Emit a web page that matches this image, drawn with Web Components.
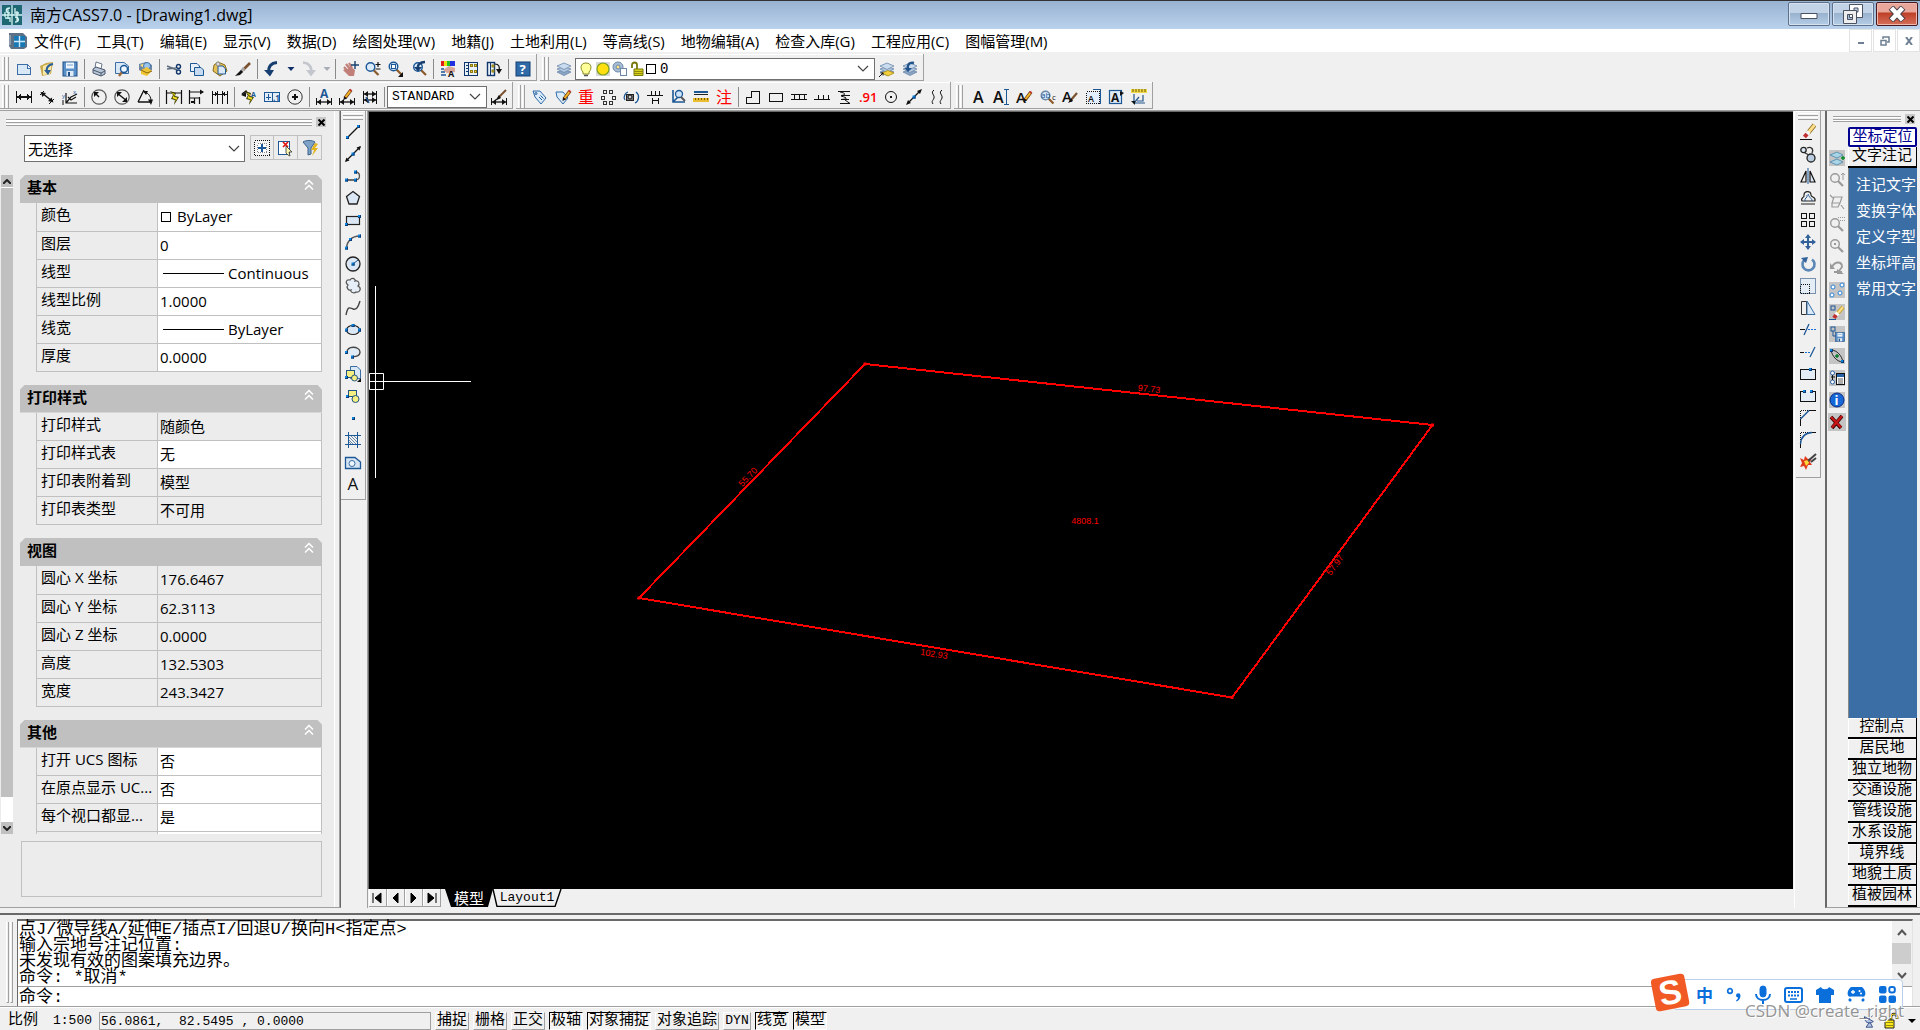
<!DOCTYPE html>
<html lang="zh-CN">
<head>
<meta charset="utf-8">
<title>南方CASS7.0 - [Drawing1.dwg]</title>
<style>
html,body{margin:0;height:100%;overflow:hidden}
body{font:15px/20px "Open Sans","Noto Sans CJK SC",sans-serif;color:#000;background:#f0f0f0;
--mono:"Liberation Mono","Noto Sans CJK SC",monospace}
</style>
</head>
<body>
<cad-shell>
  <title-bar>南方CASS7.0 - [Drawing1.dwg]</title-bar>
  <menu-bar>
    <button>文件(F)</button><button>工具(T)</button><button>编辑(E)</button><button>显示(V)</button><button>数据(D)</button><button>绘图处理(W)</button><button>地籍(J)</button><button>土地利用(L)</button><button>等高线(S)</button><button>地物编辑(A)</button><button>检查入库(G)</button><button>工程应用(C)</button><button>图幅管理(M)</button>
  </menu-bar>
  <tool-dock>
    <tool-row>
      <tool-bar label="标准" icons="new open save | print preview publish | cut copy paste brush | undo drop redo dropoff | pan zoom zoomwin zoomprev | props center palettes | help"></tool-bar>
      <tool-bar label="图层"><tool-button icon="layers"></tool-button><layer-combo></layer-combo><tool-button icon="layercur"></tool-button><tool-button icon="layerprev"></tool-button></tool-bar>
    </tool-row>
    <tool-row>
      <tool-bar label="标注" icons="dimlin dimalign dimord | dimrad dimdia dimang | dimquick dimbase dimcont | leader tolerance centermark | dimedit dimtedit dimupdate |"><style-combo></style-combo><tool-button icon="dimstyle"></tool-button></tool-bar>
      <tool-bar label="实用工具" icons="tag tagedit redo2 blocks rotcam fence coordzoom ruler note | house rect road wall slope elev circ pline curve2"></tool-bar>
      <tool-bar label="文字" icons="textA textI textedit textfind textstyle textscale textjust textspace"></tool-bar>
    </tool-row>
  </tool-dock>
  <work-area>
    <property-palette></property-palette>
    <tool-bar vertical label="绘图" icons="line xline polyline polygon rectangle arc circle cloud spline ellipse elarc insert block point hatch region mtext"></tool-bar>
    <drawing-view></drawing-view>
    <tool-bar vertical label="修改" icons="erase copyobj mirror offset array move rotate scale stretch trim extend breakpt break chamfer fillet explode"></tool-bar>
    <screen-menu></screen-menu>
  </work-area>
  <command-dock></command-dock>
  <status-bar></status-bar>
</cad-shell>
<ime-bar></ime-bar>

<script>
/* ---- icon drawing helpers, 16 x 16 grid ---- */
const P=(d,s='#111',w=1,f='none')=>`<path d="${d}" stroke="${s}" stroke-width="${w}" fill="${f}"/>`;
const F=(d,f='#111')=>`<path d="${d}" fill="${f}"/>`;
const C=(x,y,r,s='#111',f='none',w=1)=>`<circle cx="${x}" cy="${y}" r="${r}" stroke="${s}" fill="${f}" stroke-width="${w}"/>`;
const R=(x,y,w,h,s='#111',f='none',k=1)=>`<rect x="${x}" y="${y}" width="${w}" height="${h}" stroke="${s}" fill="${f}" stroke-width="${k}"/>`;
const Q=(x,y)=>`<rect x="${x}" y="${y}" width="3" height="3" fill="#0b86e0"/><path d="M${x} ${y+2.5}h3M${x+2.5} ${y}v3" stroke="#0a3d78"/>`;
const T=(x,y,z,t,c='#111',w=400)=>`<text x="${x}" y="${y}" font-size="${z}" fill="${c}" font-weight="${w}" font-family="Open Sans,Noto Sans CJK SC,sans-serif">${t}</text>`;
const B='#1c5796',LB='#cfe0f1',Y='#f3cf3d',G='#9a9a9a';
const pencil=(x,y)=>`<g transform="translate(${x} ${y})">${P('M1 9L7 1','#6a3a10',3.4)}${P('M1.6 8L6.6 1.6','#f5b52a',2)}${F('M-.5 11L0 7.5L2.8 9.4Z')}${P('M6 2L7.4 .6','#c43a3a',2.4)}</g>`;
const bolt=F('M4 2L10 4L9 7L13 8L8 16L9 11L5 10L7 6Z','#3b3b00')+F('M5.3 3.4L9 5L8 7.7L11.6 8.7L9 13L9.8 10.2L6.3 9.3L8 6Z','#f5e020');
const lens=(x,y,c=B,f='#d9ebfa')=>P(`M${x+3} ${y+3}L${x+8} ${y+8}`,c===G?G:'#8a5a2a',2.2)+C(x,y,4.3,c,f,1.4);
const sheets=P('M1 11L8 8.5L15 11L8 14.5Z','#6c87a8',.8,'#8aa5c4')+P('M1 8L8 5.5L15 8L8 11.5Z','#6c87a8',.8,'#b2c8e0')+P('M1 5L8 2L15 5L8 8.5Z','#6c87a8',.8,'#c9dbee');
const floppy=(x,y,k)=>`<g transform="translate(${x} ${y}) scale(${k})">${R(1,1,14,14,'#1d4f86','#5a8fc8')}${F('M4 1.5h8v6H4Z','#eef5fc')}${F('M4.5 10h7v5h-7Z','#dfe9f3')}${F('M6 11h2v4H6Z','#1d4f86')}${P('M5 4h6','#7aa2cc')}</g>`;
const bg='<path d="M0 0h16v16H0Z" fill="#c4c4c4"/>';
const dimH=(y,x0=1,x1=15)=>P(`M${x0} ${y}H${x1}`,'#111',1.3)+F(`M${x0} ${y}l4 -3v6ZM${x1} ${y}l-4 -3v6Z`);
const lock=(c='#d9d018')=>P('M3 7V4a2.5 2.5 0 0 1 5 0V8','#77780a',1.8)+P('M5 8h9v6.500H5Z','#77780a',1,c)+P('M5 10.500h9M5 12.500h9','#8c8a10');
const ICON={
new:P('M1.500 3.500H11L14.500 7V13.500H1.500Z','#3a6ea5',1,'#d8e8f7')+P('M11 3.500V7H14.500','#3a6ea5',1,'#fff'),
open:F('M1 5L7 2L14 1L12 13L3 15Z','#c9a94d')+F('M4 5L13 2L11 13L4 14Z','#f7e9a8')+P('M14 3C8 4 7 8 8 11','#2b5e97',2.2)+F('M5 9L12 9L9 14Z','#2b5e97'),
save:floppy(0,0,1),
print:F('M5 1L11 3L10 8L4 7Z','#fff')+P('M5 1L11 3L10 8L4 7Z','#68758a')+P('M2 8L5 6L14 9V13L10 15L2 12Z','#4a586e',1,'#b9c6d8')+P('M2 9L10 12L14 10M10 12V15','#4a586e'),
preview:P('M1.500 1.500H10L14.500 5V12.500H1.500Z','#3a6ea5',1,'#d8e8f7')+P('M8 11L5 15','#9a6a3a',2.4)+C(10,8,3.500,B,'#eef6ff',1.400),
publish:F('M2 3L9 1L15 4V9L9 13L2 9Z','#6f87a5')+F('M3 4L9 2L14 5L8 8Z','#ffe680')+C(10,5,3.500,'#3c6ea5','#9cc6ee')+F('M4 9L10 6L15 10L10 15L4 13Z','#f0c535')+P('M4 9L10 12L15 10','#8a6a10'),
cut:P('M1 5L11 9M1 8L10 7','#5e6e80',1.600)+C(12.500,5.500,2,'#10366b','none',1.400)+C(12.500,11,2,'#10366b','none',1.400),
copy:P('M1.500 2.500H8L10.500 5V10.500H1.500Z',B,1,'#e8f1fa')+P('M5.500 6.500H12L14.500 9V14.500H5.500Z',B,1,'#c6dbf0'),
paste:P('M2 4L6 1L13 4L15 10L8 15L1 10Z','#8a6d1f',1,'#e6c157')+P('M6 5H11L13.500 8V13H6Z',B,1,'#dbe9f7')+C(6,3,2,'#8a8a8a','#ddd'),
brush:P('M15 2L8 9','#7a5230',2.600)+P('M9 7L6 11','#a8a8a8',3)+F('M6 9L8 11L5 14L0 15Z','#111'),
undo:P('M13 1.500C7 2 4 6 5 11','#173e70',3)+F('M0 9H10L6 15.500Z','#173e70'),
redo:P('M3 1.500C9 2 12 6 11 11','#c3c6cc',2.600)+F('M6 9H16L11 15.500Z','#c3c6cc'),
drop:F('M4.500 6H11.500L8 10Z','#10306a'),dropoff:F('M4.500 6H11.500L8 10Z','#a9adb5'),
pan:P('M2 6L6 10M4 3L8 8M7 2L10 7','#c07f78',2.200)+F('M4 9L9 6L13 9L12 15H7L1 9L3 8Z','#c07f78')+P('M13 0V8M9 4H17','#17406f',1.400),
zoom:lens(5.500,6)+P('M13 1V6M10.500 3.500H15.500M10.500 8H15.500','#111',1.200),
zoomwin:lens(5.500,5.500)+R(3.500,3.500,4,4,B,'#fff')+F('M15 11V16H10Z'),
zoomprev:lens(7,6)+P('M14 1C9 1 6 4 7 8','#173e70',2.400)+F('M3 6H11L7 10.500Z','#173e70'),
props:F('M1 0h4v5H1Z','#e01c1c')+F('M4 0h3v5H4Z','#f0e010')+F('M7 0h3v5H7Z','#20c020')+F('M10 0h5v5h-5Z','#2030e0')+F('M3 9L9 5L15 7V11L7 12Z','#d8a59a')+P('M1 8h3M1 11h4M1 14h5',B,1.500)+T(8,16,9,'A','#111',700),
center:R(1.500,1.500,13,13,'#10366b','#e8f0f8',1.400)+P('M5.500 1.500V14.500','#10366b')+P('M2.500 4h2M2.500 7h2M2.500 10h2','#10366b')+R(7.500,3.500,2,2,'#8a7a10',Y)+R(11.500,3.500,2,2,'#8a7a10',Y)+R(7.500,9.500,2,2,'#8a7a10',Y)+R(11.500,9.500,2,2,'#8a7a10',Y),
palettes:R(1.500,1.500,7,13,'#10366b','#e8f0f8',1.400)+P('M4.500 1.500V14.500','#10366b')+R(6,4,2,2,'#8a7a10',Y)+R(6,9,2,2,'#8a7a10',Y)+P('M9 3C13 3 14 6 13 10','#111',1.200)+F('M10 8H16L13 13Z'),
help:R(1,1,14,14,'#123f73','#2f6ba8')+T(4.500,13,13,'?','#fff',700),
layers:sheets,layercur:sheets+P('M3 12L9 9.500L15 12L9 15Z','#a98d10',.8,Y)+P('M0 16L4 12M1.500 12H4V14.500'),
layerprev:sheets+P('M12 2C7 1 5 4 6 8','#23558c',2.400)+F('M2.500 7H10L6 11Z','#23558c'),
dimlin:P('M.5 2V14M15.500 2V14')+dimH(8,1,15),
dimalign:P('M1 6L5 2M10 15L15 10')+P('M3 4L13 12','#111',1.400)+F('M1.500 3L7 4L3.500 8ZM14.500 13.500L9 12L12.500 8.500Z'),
dimord:P('M4 4V14H15M4 14L9 8L15 5','#111',1.200)+P('M6 8L9 11L14 8','#111',1.200)+T(0,9,6,'y',B)+T(11,5,6,'x',B)+P('M1 11V16','#111'),
dimrad:C(8,8,7.200,'#555','none',1.200)+P('M8 8L4 4','#111',1.500)+F('M3 3H8L3 8Z'),
dimdia:C(8,8,7.200,'#555','none',1.200)+P('M3 4L13 12','#111',1.500)+F('M3 3H8L3 8ZM13 13H8L13 8Z'),
dimang:P('M1 13H15M1 13L7 1','#111',1.300)+P('M7 3C12 4 14 8 14 12')+F('M6 2L11 2L9 6ZM14 16L11 10.500H16Z'),
dimquick:P('M.5 1V15M15.500 1V15M1 4H15','#111',1.200)+bolt,
dimbase:P('M.5 1V15M1 3H14M5.500 9V15M10.500 8V15M1 9H10','#111',1.200)+F('M15 3L11 .5V5.500ZM2 12h3v2H2Z'),
dimcont:P('M.5 2V15M5.500 2V15M10.500 2V15M15.500 2V15M0 5H16')+F('M6 5L3 3V7ZM10 5L13 3V7Z'),
leader:P('M1 5L5 2L8 7','#111',1.400)+F('M0 6L5 3V8Z')+bolt+T(10,8,7,'A',B,700),
tolerance:R(.5,3.500,15,9,B,'#e4eefa',1.300)+P('M8 3V13M4.500 5V11M1.500 8H7',B)+T(9,12,8,'.1',B,700),
centermark:C(8,8,7.200,'#333')+P('M5 8H11M8 5V11','#111',2),
dimedit:T(4,9,12,'A',B,700)+P('M.5 9V16M15.500 9V16')+dimH(13,1,15),
dimtedit:P('M.5 9V16M15.500 9V16')+dimH(13,1,15)+pencil(5,0),
dimupdate:P('M1.500 2V15M14.500 2V15')+dimH(11,2,14)+dimH(5,2,14)+P('M4 8L7 14',B,1.400),
dimstyle:P('M.5 9V16M15.500 9V16')+dimH(13,1,15)+P('M15 1L8 8','#7a5230',2)+F('M8 6L10 9L4 12Z'),
tag:P('M1 2L8 2L14 9L9 15L3 8Z','#2f6ba8',1,'#dcebf9')+C(4,4.500,1,B)+P('M7 8L10 11M8.500 6.500L11.500 9.500',B),
tagedit:P('M1 3L8 3L13 9L8 15L2 8Z','#2f6ba8',1,'#dcebf9')+pencil(8,1),
redo2:T(0,14,16,'重','#f00'),note:T(0,14,16,'注','#f00'),
blocks:[[2,1],[8,1],[0,7],[11,7],[2,12],[8,12]].map(a=>R(a[0]+.5,a[1]+.5,3,3,'#333')).join(''),
rotcam:R(2.500,5.500,7,6,'#222','#777')+C(6,8,2,'#111','#ccc')+P('M12 3C16 6 15 12 11 14M1 11C-1 8 1 4 4 3',B,1.300),
fence:P('M0 6.500H16M4.500 6V2M8.500 6V2M12.500 6V2M5.500 9V15M11.500 9V15M5.500 11.500H11'),
coordzoom:P('M3 1V13H15M3 13L8 8',B,1.600)+C(9,5,3.500,B,'#cfe4f8',1.300)+P('M11 8L15 12','#555',2),
ruler:P('M1 3H15',B,2)+P('M1 5.500h14','#222',1)+F('M0 9H16V13H0Z','#e9bd2e')+P('M2 9v2M5 9v2M8 9v2M11 9v2M14 9v2','#7a5a00'),
house:P('M1.500 14.500V8.500H6.500V2.500H14.500V14.500Z'),rect:R(1.500,4.500,13,8),
road:P('M0 5.500H16M0 10.500H16M3.500 5V10M8.500 5V10M13.500 5V10'),wall:P('M0 10.500H16M4.500 10V6M9.500 10V6M14.500 10V6'),
slope:P('M1 2.500H13M3 3C9 4 9 6 4 6.500H13M4 7C11 9 11 10 4 10.500H12M3 14.500H13L8 11'),
elev:T(-1,13,13,'.91','#f00',600),circ:C(8,8,5.500)+R(7.500,7.500,1,1),
pline:P('M2 14L14 2','#111',1.300)+F('M0 16L2 11L5 14ZM16 0L14 5L11 2Z')+Q(6.500,6.500),
curve2:P('M5 1C1 4 6 6 5 9S2 12 4 15M13 1C9 4 14 6 13 9S10 12 12 15'),
textA:T(3,14,16,'A','#111',600),textI:T(0,14,16,'A','#111',600)+P('M11 .5H16M13.500 1V15M11 15.500H16',B),
textedit:T(0,14,15,'A','#111',600)+pencil(8,2),textfind:lens(6.500,6.500,'#6a87a8')+T(2,9,8,'ab',B)+T(13,11,8,'c'),
textstyle:T(0,13,15,'A','#111',600)+P('M15 4L9 11','#7a5230',2.200)+F('M9 9L11 12L6 14Z'),
textscale:`<rect x="1.500" y="2.500" width="13" height="12" fill="#e3eefa" stroke="#111" stroke-dasharray="1 1"/>`+P('M8 .5H15.500V15',B)+T(3,13,9,'A','#111',600),
textjust:R(1.500,1.500,12,13,B,'#dfeaf7',1.200)+T(3,13,12,'A','#111',700)+F('M12 2l4 2-4 3Z'),
textspace:F('M0 0H16V4H0Z','#f0d948')+P('M2 0v3M5 0v3M8 0v3M11 0v3M14 0v3','#6a5a00')+P('M3 5V14H14M3 14L8 8M12 6V12H6','#23558c',1.200)+F('M0 12h4v4Z'),
line:P('M3 13L13 3','#111',1.300)+Q(1,12)+Q(12,1),
xline:P('M1 15L15 1','#111',1.300)+F('M0 16L1.500 11.500L4.500 14.500ZM16 0L14.500 4.500L11.500 1.500Z')+Q(6.500,6.500),
polyline:P('M2 12H10','#111',1.200)+P('M10 4C16 4 16 12 10 12','#555',1.300)+Q(0,10.500)+Q(9,10.500)+Q(9,2.500),
polygon:P('M8 1.500L14.500 6.500L12 14H4L1.500 6.500Z','#222',1.300,'#dbe7f4'),
rectangle:R(1.500,4.500,13,8,'#222','#dbe7f4',1.200)+Q(0,11)+Q(13,3),
arc:P('M1.500 14C2 7 7 2 14.500 2','#555',1.400)+Q(0,12.500)+Q(4,4)+Q(13,.5),
circle:C(8,8,7,'#222','#dbe7f4',1.300)+P('M8 8L13 4',B)+Q(6.500,6.500),
cloud:P('M3 7C0 5 1 1 5 2C7 -1 11 1 10 3C14 2 15 6 13 8C17 10 15 15 11 14C9 16 5 14 6 12C3 13 1 9 3 7Z','#555',1.200,'#e6eef7'),
spline:P('M1 15C3 5 5 8 8 9S13 8 15 1','#444',1.400),
ellipse:`<ellipse cx="8" cy="8" rx="6.500" ry="4.500" fill="#dbe7f4" stroke="#222" stroke-width="1.200"/>`+Q(0,6.500)+Q(13,6.500)+Q(6.500,2),
elarc:P('M2 9C1 1 15 2 15 8C15 12 11 13 7 12.500','#444',1.300,'#e0ebf6')+Q(0,7)+Q(6,11.500),
insert:P('M5.500 .5H12L15.500 4V12.500H5.500Z','#3a6ea5',1,'#d8e8f7')+R(1.500,4.500,8,7,'#22557f','#f5ee80')+C(9.500,12,3,'#22557f','#f5ee80')+Q(0,10)+F('M16 12V16H12Z'),
block:R(3.500,2.500,8,6,'#22557f','#f5ee80')+C(10.500,11,3.500,'#22557f','#f5ee80')+Q(1,7),
point:Q(7,7),
hatch:P('M3.500 0V16M12.500 0V16M0 3.500H16M0 12.500H16',B,1.400)+P('M4 5L11 12M4 8L8 12M6 4L12 10M9 4L12 7M4 10l2 2','#4a6f98',.8),
region:P('M.5 3.500H10L15.500 8V14.500H.5Z','#1c5796',1.300,'#d5e4f3')+C(7,9.500,3,'#3a6ea5','#eef5fc'),
mtext:T(2.500,14,17,'A','#111',500),
erase:P('M14.500 1L8 9','#8a6a20',4.400)+P('M14.500 1L8 9','#ffe08a',2.800)+P('M9 7.500L7 10','#f4f4f4',4)+P('M7 10L4.500 13','#c03030',4)+P('M0 15.500H12'),
copyobj:C(3.500,4,2.700,'#222','#dbe7f4',1.300)+C(11,12,4,'#222','#b9cce0',1.300)+P('M5 7L9 9M7 2C11 0 14 3 12 7','#333',1.300),
mirror:P('M1 14H6V3Z','#111',1.200)+P('M10 14H15L10 3Z','#111',1.200,'#dbe7f4')+P('M8 0V16',B),
offset:P('M1 14H15M2 11C0 7 5 8 4 5C4 1 11 0 11 5C11 8 16 6 15 11H2Z','#222',1.200)+P('M5 11C4 8 8 8 7 5M8 4C10 9 12 8 12 11',B),
array:R(1.500,1.500,5,5,'#111','none',1.300)+R(9.500,1.500,5,5,'#111','none',1.300)+R(1.500,9.500,5,5,'#111','none',1.300)+R(9.500,9.500,5,5,'#111','none',1.300),
move:P('M8 1V15M1 8H15','#33619a',2)+F('M8 0L11 4H5ZM8 16L5 12H11ZM0 8L4 5V11ZM16 8L12 11V5Z','#33619a'),
rotate:P('M5 3.500A6 6 0 1 0 12 3.500','#5b86b5',2.600)+F('M1 2L8 1L6 7Z','#33619a'),
scale:P('M.5 .5H15.500V15.500H.5Z','#7890ab',1,'#e4edf6')+`<rect x=".5" y="6.500" width="9" height="9" fill="none" stroke="#111" stroke-dasharray="1 1"/>`,
stretch:P('M1.500 1.500V14.500H6.500V1.500Z','#333',1)+P('M7 1L15 14.500H7Z','#3a6ea5',1,'#d8e8f7'),
trim:P('M0 7.500H5')+P('M4 13L9 2',B,1.300)+`<path d="M8 7.500H16" stroke="#1b6fd0" stroke-dasharray="2 1"/>`,
extend:P('M0 8.500H4')+`<path d="M5 8.500H11" stroke="#1b6fd0" stroke-dasharray="2 1"/>`+P('M10 13L15 3',B,1.300),
breakpt:R(.5,3.500,15,10,'#111','#e4edf6')+Q(9,2),
break:P('M4 3.500H.5V13.500H15.500V3.500H12','#111',1,'#e4edf6')+Q(3,2)+Q(10,2),
chamfer:`<path d="M.5 16V.5H16" stroke="#111" fill="none" stroke-dasharray="1 1"/>`+P('M.5 16V9M9 .5H16')+P('M.5 9L9 .5',B,1.400),
fillet:`<path d="M.5 16V.5H16" stroke="#111" fill="none" stroke-dasharray="1 1"/>`+P('M.5 16V12M12 .5H16')+P('M.5 12C1 5 5 1 12 .5',B,1.400),
explode:F('M0 4L4 6L5 2L8 5L12 4L10 8L12 11L8 11L6 16L4 12L0 13L2 9Z','#e03a1c')+F('M4 7L8 6L9 9L6 12Z','#ffd83a')+P('M8 7L16 0M11 8L16 4','#444',2),
vlayers:bg+P('M1 5L8 2L14 5L8 8ZM1 12L8 9L14 12L8 15Z','#4a86a8',.8,'#a9d4e6')+P('M14 10V6M12 8H16','#0a8a2a',1.500),
g1:lens(6,6,G,'none')+P('M14 1V8M12 3L14 1L16 3',G),
g2:P('M5 3H13L11 9H3ZM3 9V13H9L11 9M1 1L4 4M12 11L15 15',G,1.200),
g3:lens(6,7,G,'none')+`<path d="M9 1.500H16M9 4.500H16" stroke="#9a9a9a" stroke-dasharray="1 1"/>`,
g4:lens(6,6,G,'none')+R(5.500,5.500,1,1,G),
g5:P('M3 7C6 1 13 1 13 7L10 11M13 12H5',G,1.800)+F('M1 3V9H6ZM8 9V14H15Z',G),
nodes:bg+C(4,5,2,'#2a82d8','#fff')+C(13,3,2,'#2a82d8','#fff')+C(3,13,2,'#2a82d8','#fff')+C(11,11,2,'#2a82d8','#fff'),
delnode:bg+R(2,2,4,4,B)+P('M14 3L9 9','#c8a02a',4)+P('M14 3L9 9','#ffe08a',2)+P('M9 9L7 11','#fff',4)+P('M7 11L5 14','#c03030',4)+P('M0 15.500H7',B),
savenode:bg+R(2,1,4,4,B)+P('M4 5V10H8',B)+floppy(6,6,.62),
linknode:bg+P('M2 2C3 8 8 14 14 14C13 8 8 2 2 2','#222',1)+P('M8 10V6M6 8H10','#0a7a2a',1.400)+Q(1,1)+Q(12,12),
listnode:bg+C(3.500,3,2,'#2a62a8','#fff')+C(3.500,12,2,'#2a62a8','#fff')+P('M6 7H2M3.500 5V10')+R(7.500,3.500,8,11,'#111','#fff')+F('M8 4h7v3H8Z','#2a62a8')+P('M9 9h5M9 11h5M9 13h5','#333',.8),
info:bg+C(8,8,7,'#0a2a80','#1668d8')+T(5.500,13,13,'i','#fff',700),
delx:'<path d="M-1 -1h18v18H-1Z" fill="#c4c4c4"/>'+P('M2 3L12 14M13 2L3 14','#300',3.600)+P('M2 3L12 13.500M13 2L3 13.500','#c81414',2.400),
pick:`<rect x=".5" y=".5" width="15" height="15" fill="#f4f4f4" stroke="#111" stroke-dasharray="1 1"/><rect x="3.500" y="3.500" width="9" height="9" fill="#fff" stroke="#888" stroke-dasharray="1 1"/>`+P('M4 8H12M8 4V12',B,2),
pickx:R(.5,1.500,11,13,B,'#fff')+P('M5 2L10 7M10 2L5 7','#e01010',1.600)+P('M8 6L14 12L11 12L12 16L10 15L8 13Z','#333',.8,'#fff8b0'),
filter:P('M1 2C4 0 10 0 13 2L9 8V14L6 15V8Z','#3c6188',1,'#7ea3c8')+F('M13 3L9 10H12L10 16L16 8H13L16 4Z','#e3b41e'),
bulb:P('M5 11C2 8 2 2 8 2S14 8 11 11V13H5Z','#8c8a20',1,'#ffff9a')+P('M6 14.500H10','#555',1.500),
sun:F('M1 1H15V15H1Z','#d9d9d9')+C(8,8,6,'#7aa020','#ffdf10',1.200),
freeze:C(6,6,5,'#6c87a8','#a9bfd8')+C(6,6,2,'#6c87a8','#ffe680')+R(8.500,7.500,6,7,'#6c87a8','#fff'),
unlock:lock(),
lockY:P('M8 7V4a3 3 0 0 1 6 0V6','#222',2.600)+P('M8 7V4a3 3 0 0 1 6 0V6','#ffe81a',1)+P('M2 7h9v8H2Z','#222',1,'#ffe81a')+P('M2 9.500h9M2 12.500h9','#8c8a10'),
dish:P('M3 2C3 9 8 12 14 8ZM9 9L5 15H13L10 9M8 5L13 1','#3a5288',1.200,'#b4c3e2')
};
const CRISP=/^(dimlin|dimcont|fence|house|rect|road|wall|array|breakpt|break|scale|ruler|blocks|center|textscale|pick|hatch|new|tolerance)$/;
const svg=(n,s=16)=>`<svg width="${s}" height="${s}" viewBox="0 0 16 16" overflow="visible" aria-hidden="true"${CRISP.test(n)?' shape-rendering="crispEdges"':''}>${ICON[n]||''}</svg>`;

/* ---- shared base ---- */
const RESET=':host,*{box-sizing:border-box}button{font:inherit;color:inherit;background:none;border:0;padding:0;margin:0;white-space:nowrap}svg{display:block;flex:none}';
function define(name,css,html,setup){
  customElements.define(name,class extends HTMLElement{
    constructor(){super();this.attachShadow({mode:'open'})}
    connectedCallback(){
      if(this.shadowRoot.childNodes.length)return;
      this.shadowRoot.innerHTML=`<style>${RESET}${css}</style>${typeof html==='function'?html(this):html}`;
      if(setup)setup(this);
    }
  });
}

define('cad-shell',':host{display:flex;flex-direction:column;height:100vh;background:#f0f0f0}','<slot></slot>');

define('title-bar',`:host{display:flex;align-items:center;height:29px;flex:none;border-top:1px solid #333;background:linear-gradient(#98b2d1,#bad2ec);padding:0 2px}
h1{font:inherit;font-size:16px;margin:0 auto 0 8px}
.b{display:flex;gap:2px;align-self:flex-start;margin-top:1px}
button{width:42px;height:24px;border:1px solid #5d718c;border-radius:2px;box-shadow:inset 0 0 0 1px #d5e2f0;background:linear-gradient(#c2d3e8 45%,#98b1cd 46%,#b5cde6);display:grid;place-items:center}
.x{border-color:#47181c;box-shadow:inset 0 0 0 1px #f0b9b0;background:linear-gradient(#e9a79b 40%,#bf3f28 46%,#d5705a)}`,
`<svg width="20" height="20" viewBox="0 0 20 20"><path d="M0 0h20v20H0Z" fill="#1d6873"/><path d="M10 0V20M0 10H20M8 3C3 3 3 8 8 8M13 3V8H17M3 13H8V17M13 17C18 17 17 12 13 12M3 7v5M6 4v10M15 6v10" stroke="#d5f3f2" stroke-width="1.300" fill="none"/></svg><h1><slot></slot></h1>
<div class="b"><button aria-label="最小化"><svg width="18" height="18"><path d="M1 8.500H17V13.500H1Z" fill="#fff" stroke="#4a5160"/></svg></button><button aria-label="还原"><svg width="22" height="22"><path d="M7.500 1.500H20.500V14.500H7.500ZM12 5V9H16V5Z" fill="#fff" fill-rule="evenodd" stroke="#4a5160"/><path d="M1.500 7.500H14.500V20.500H1.500ZM5.500 11.500V16.500H10.500V11.500Z" fill="#eee" fill-rule="evenodd" stroke="#4a5160"/></svg></button><button class="x" aria-label="关闭"><svg width="20" height="16"><path d="M4 1.500L16 14.500M16 1.500L4 14.500" stroke="#4a4048" stroke-width="6.500"/><path d="M4.500 2L15.500 14M15.500 2L4.500 14" stroke="#fff" stroke-width="4.500"/></svg></button></div>`);

define('menu-bar',`:host{display:flex;align-items:center;height:23px;flex:none;background:#fff;padding:0 0 0 8px}
nav{display:flex;gap:16px;margin:0 auto 0 6px}
::slotted(button){font:inherit;border:0;background:none;padding:0;margin:0;white-space:nowrap;line-height:20px}
.b{display:flex;gap:1px}.b button{width:23px;height:23px;border:1px solid #e3e3e3;display:grid;place-items:center}`,
`<svg width="20" height="18" viewBox="0 0 20 18"><path d="M1 1H15L19 5V15L16 17H3L1 14Z" fill="#5c7186"/><rect x="6" y="4" width="11" height="11" fill="#1678b4"/><path d="M11.500 4V15M6 9.500H17" stroke="#cbe9fa" stroke-width="1.400"/><path d="M2 3v10" stroke="#b8c6d4"/></svg><nav><slot></slot></nav>
<div class="b"><button aria-label="最小化窗口"><svg width="8" height="8"><path d="M1 6H7" stroke="#6e7f92" stroke-width="2"/></svg></button><button aria-label="还原窗口"><svg width="10" height="10"><path d="M3 3V1H9V6H7M1 4.500H6V9H1Z" stroke="#6e7f92" stroke-width="1.500" fill="none"/></svg></button><button aria-label="关闭窗口"><svg width="8" height="8"><path d="M1 0L7 8M7 0L1 8" stroke="#6e7f92" stroke-width="2"/></svg></button></div>`);

define('tool-dock',':host{display:flex;flex-direction:column;gap:1px;flex:none;padding:2px 0 1px}','<slot></slot>');
define('tool-row',':host{display:flex;gap:3px}','<slot></slot>');
define('tool-button',`:host{display:block}button{width:23px;height:22px;display:grid;place-items:center}:host([icon^=drop]) button{width:13px}`,
 h=>`<button aria-label="${h.getAttribute('icon')}">${svg(h.getAttribute('icon'))}</button>`);

define('tool-bar',`:host{display:flex;align-items:center;height:27px;padding:3px 2px 0 0;border:solid #a0a0a0;border-width:0 1px 1px 0;box-shadow:inset 0 1px #fff}
.g{width:12px;height:23px;flex:none;display:flex;gap:1px;padding-left:2px}
.g i{width:3px;border:solid;border-width:0 1px 0 1px;border-color:#fff #a0a0a0 #fff #fff}
.s{width:6px;height:20px;flex:none;display:flex;justify-content:center}.s:before{content:"";width:1px;background:#8a8a8a}
:host([vertical]){flex-direction:column;width:25px;height:auto;align-self:flex-start;padding:1px 0 4px;flex:none}
:host([vertical]) .g{width:100%;height:9px;flex-direction:column;padding:1px 2px}
:host([vertical]) .g i{width:auto;height:3px;border-width:1px 0;border-color:#fff #fff #a0a0a0}`,
 h=>`<div class="g"><i></i><i></i></div>${(h.getAttribute('icons')||'').split(' ').filter(Boolean).map(n=>n==='|'?'<span class="s"></span>':`<tool-button icon="${n}"></tool-button>`).join('')}<slot></slot>`,
 h=>{h.setAttribute('role','toolbar');h.setAttribute('aria-label',h.getAttribute('label'))});

const CHEV='<svg class="v" width="12" height="8" viewBox="0 0 12 8"><path d="M1 1L6 6L11 1" fill="none" stroke="#444" stroke-width="1.200"/></svg>';
const COMBO=`:host{display:grid}select{appearance:none;border:1px solid #707070;border-radius:0;background:#fff;color:#000;margin:0;outline:0;width:100%}.v{justify-self:end;align-self:center;margin-right:6px;pointer-events:none}select,.i,.v{grid-area:1/1}`;
define('style-combo',COMBO+':host{width:100px}select{height:22px;font:13px/20px var(--mono);padding:0 4px}',`<select aria-label="标注样式"><option>STANDARD</option></select>${CHEV}`);
define('layer-combo',COMBO+`:host{width:300px}select{height:22px;font:14px/18px "Liberation Mono",monospace;padding:0 0 0 84px}
.i{display:flex;align-items:center;gap:1px;padding-left:3px;pointer-events:none}.i b{width:10px;height:10px;border:1px solid #000}`,
`<select aria-label="图层"><option>0</option></select><span class="i">${['bulb','sun','freeze','unlock'].map(n=>svg(n)).join('')}<b></b></span>${CHEV}`);

define('work-area',':host{display:flex;flex:1;min-height:0;border-top:1px solid #a0a0a0}','<slot></slot>');

/* ---- properties ---- */
const GROUPS=[
['基本',[['颜色','<i class="sw"></i>ByLayer',1],['图层','0',1],['线型','<i class="ln"></i>Continuous',1],['线型比例','1.0000',1],['线宽','<i class="ln"></i>ByLayer',1],['厚度','0.0000',1]]],
['打印样式',[['打印样式','随颜色'],['打印样式表','无',1],['打印表附着到','模型'],['打印表类型','不可用']]],
['视图',[['圆心 X 坐标','176.6467'],['圆心 Y 坐标','62.3113'],['圆心 Z 坐标','0.0000'],['高度','132.5303'],['宽度','243.3427']]],
['其他',[['打开 UCS 图标','否',1],['在原点显示 UC...','否',1],['每个视口都显...','是',1],['','',1]]]];
define('property-group',`:host{display:block;flex:none;margin-bottom:13px}
button{display:flex;width:100%;height:28px;align-items:flex-start;justify-content:space-between;padding:2px 7px 0;background:#c0c0c0;font-weight:700;clip-path:polygon(5px 0,calc(100% - 5px) 0,100% 5px,100% 100%,0 100%,0 5px)}
button svg{margin:2px 1px}
table{border-collapse:collapse;table-layout:fixed;width:calc(100% - 16px);margin-left:16px}
th,td{height:28px;border:1px solid #c0c0c0;border-top:0;font-weight:400;text-align:left;white-space:nowrap;overflow:hidden}
th{width:121px;padding:0 0 5px 4px}td{padding:0 2px 1px}.w{background:#fff}
.sw{display:inline-block;width:10px;height:10px;border:1px solid #000;margin:0 6px 0 1px}.ln{display:inline-block;width:61px;height:1px;background:#000;margin:0 4px 5px 3px}`,
h=>{const g=GROUPS[+h.getAttribute('group')];return `<button><span>${g[0]}</span><svg width="10" height="12"><path d="M1 5.500L5 1.500L9 5.500M1 10.500L5 6.500L9 10.500" stroke="#fff" stroke-width="1.500" fill="none"/></svg></button><table>${g[1].map(r=>`<tr><th scope="row">${r[0]}</th><td class="${r[2]?'w':''}">${r[1]}</td></tr>`).join('')}</table>`});

define('property-palette',`:host{display:flex;flex-direction:column;width:341px;flex:none;background:#ececec;border:solid #696969;border-width:0 1px 1px 0;border-bottom-color:#a0a0a0;box-shadow:inset -1px 0 #a0a0a0,inset -5px 0 #f0f0f0,inset -6px 0 #fff;padding:5px 18px 10px 1px}
.t{display:flex;align-items:center;gap:4px;padding:0 0 0 5px;height:12px;margin-right:-4px}
.t i{flex:1;height:7px;border:solid #a0a0a0;border-width:1px 0;background:linear-gradient(#fff 2px,#a0a0a0 2px,#a0a0a0 3px,#ececec 3px,#ececec 4px,#fff 4px)}
.t button{width:10px;height:10px;background:#c8c8c8;display:grid;place-items:center}
.c{display:flex;padding-left:23px;margin:7px 0 13px;align-items:flex-start}
.k{display:grid;flex:1;margin-right:5px}.k>*{grid-area:1/1}
select{appearance:none;height:27px;border:1px solid #707070;border-radius:0;background:#fff;font:inherit;color:#000;padding:0 3px;width:100%}
.v{justify-self:end;align-self:center;margin-right:5px;pointer-events:none}
.c button{width:24px;height:25px;border:1px solid #c0c0c0;display:grid;place-items:center}.c button+button{border-left:0}
.s{flex:1;min-height:0;display:flex;overflow:hidden;gap:7px}
.bar{width:12px;flex:none;display:flex;flex-direction:column;background:#fff}
.bar button{height:12px;background:#c0c0c0;display:grid;place-items:center}
.bar div{flex:1;background:#c0c0c0;border-top:1px solid #fff}.bar span{flex:0 0 25px}
.l{flex:1;display:flex;flex-direction:column;overflow:hidden}
.d{height:56px;flex:none;border:1px solid #c0c0c0;margin:7px 0 0 20px}`,
`<div class="t"><i></i><button aria-label="关闭"><svg width="7" height="7"><path d="M.5 .5L6.500 6.500M6.500 .5L.5 6.500" stroke="#000" stroke-width="2"/></svg></button></div>
<div class="c"><span class="k"><select aria-label="选择对象"><option>无选择</option></select>${CHEV}</span><button aria-label="切换">${svg('pick')}</button><button aria-label="选择">${svg('pickx')}</button><button aria-label="快速选择">${svg('filter')}</button></div>
<div class="s"><div class="bar"><button aria-label="上"><svg width="8" height="5"><path d="M0 5L4 1L8 5" stroke="#222" stroke-width="2" fill="none"/></svg></button><div></div><span></span><button aria-label="下"><svg width="8" height="5"><path d="M0 0L4 4L8 0" stroke="#222" stroke-width="2" fill="none"/></svg></button></div>
<div class="l">${GROUPS.map((g,i)=>`<property-group group="${i}"></property-group>`).join('')}</div></div><div class="d"></div>`);

const dim=(x,y,a,t)=>`<text x="${x}" y="${y}" transform="rotate(${a} ${x} ${y})" dominant-baseline="central">${t}</text>`;
define('drawing-view',`:host{display:flex;flex-direction:column;flex:1;min-width:0;margin:0 1px;border-left:1px solid #a0a0a0;box-shadow:inset -1px 0 #fff}
.m{flex:1;min-height:0;margin-right:2px;background:#000;border:solid #696969;border-width:1px 0 0 1px}
.m svg{width:100%;height:100%}text{font-size:9px;font-family:"Liberation Sans Narrow","Liberation Sans",sans-serif;fill:#f00;text-anchor:middle}
.f{height:19px;flex:none;display:flex;padding-left:1px}
.n{width:18px;height:18px;border:solid #a0a0a0;border-width:0 1px 1px 0;box-shadow:inset 1px 0 #fff;display:grid;place-items:center}
.t{display:grid;height:18px;line-height:18px;place-items:center}.t>*{grid-area:1/1}
.a{color:#fff;width:50px;margin-left:3px}.b{font:13px/18px var(--mono);width:74px;margin-left:-4px}`,
`<div class="m"><svg><path shape-rendering="crispEdges" d="M496 252L1063.500 313L863 585.500L270 486Z" fill="none" stroke="#f00" stroke-width="2"/>
<path d="M494.500 250.500h3v3h-3ZM1062 311.500h3v3h-3ZM861.500 584h3v3h-3ZM268.500 484.500h3v3h-3Z" fill="#f00"/>
${dim(780,277,6,'97.73')}${dim(379,365,-46,'55.70')}${dim(966,453,-54,'57.97')}${dim(565,542,9,'102.93')}${dim(716,409,0,'4808.1')}
<path d="M6.500 174V366M0 269.500H102M.5 261.500H14.500V277.500H.5Z" fill="none" stroke="#fff"/></svg></div>
<div class="f">${['M2 2V12M10 2V12L4 7Z','M9 2V12L4 7Z','M4 2V12L9 7Z','M3 2V12L9 7ZM11 2V12'].map((d,i)=>`<button class="n" aria-label="布局导航 ${i+1}"><svg width="13" height="14"><path d="${d}" fill="#000" stroke="#000"/></svg></button>`).join('')}
<button class="t a"><svg width="50" height="18"><path d="M1 0H49L44 18H7Z"/></svg><span>模型</span></button><button class="t b"><svg width="74" height="18"><path d="M3 0L7 17.500H65L71 0" fill="none" stroke="#000" stroke-width="1.400"/></svg><span>Layout1</span></button></div>`);

/* ---- screen menu ---- */
define('screen-menu',`:host{display:flex;flex-direction:column;width:95px;flex:none;margin-left:4px;border:solid #696969;border-width:0 0 1px 2px;border-bottom-color:#a0a0a0;font:15px/20px var(--mono);overflow:hidden}
.t{display:flex;align-items:center;height:16px;padding:0 5px 0 6px;gap:4px}.t i{flex:1;height:6px;border:1px solid #a0a0a0;border-width:1px 0;background:linear-gradient(#fff 1px,#ececec 1px,#ececec 2px,#a0a0a0 2px,#a0a0a0 3px,#fff 3px)}
.t button{width:10px;height:10px;background:#c8c8c8;display:grid;place-items:center}
.r{flex:1;display:flex;min-height:0}
.i{width:21px;flex:none;display:flex;flex-direction:column;padding-top:20px}.i button{height:22px;width:19px;display:grid;place-items:center}
.m{flex:1;min-width:0;margin-right:3px;display:flex;flex-direction:column}
.m>button{height:21px;flex:none;border:solid #000;border-width:0 1px 2px 0;box-shadow:inset 1px 1px #fff;width:100%;background:#f0f0f0;padding-top:1px;line-height:18px}
.m>.on{border:2px solid #000090;height:20px;color:#000090;background:#fff;line-height:16px;border-radius:2px}
.p{flex:1;background:#3b6ea5;color:#fff;padding:6px 0 0 7px;border-left:1px solid #888}.p button{display:block;height:26px}`,
`<div class="t"><i></i><button aria-label="关闭"><svg width="7" height="7"><path d="M.5 .5L6.500 6.500M6.500 .5L.5 6.500" stroke="#000" stroke-width="2"/></svg></button></div>
<div class="r"><div class="i">${'vlayers g1 g2 g3 g4 g5 nodes delnode savenode linknode listnode info delx'.split(' ').map(n=>`<button aria-label="${n}">${svg(n)}</button>`).join('')}</div>
<div class="m"><button class="on">坐标定位</button><button>文字注记</button><div class="p">${['注记文字','变换字体','定义字型','坐标坪高','常用文字'].map(t=>`<button>${t}</button>`).join('')}</div>${['控制点','居民地','独立地物','交通设施','管线设施','水系设施','境界线','地貌土质','植被园林'].map(t=>`<button>${t}</button>`).join('')}</div></div>`);

/* ---- command line ---- */
define('command-dock',`:host{display:flex;flex:none;margin-top:5px;border-top:2px solid #696969;border-bottom:1px solid #a0a0a0;height:94px;padding:4px 7px 0 6px;font:17px/16px var(--mono)}
.g{width:11px;flex:none;display:flex;gap:1px;padding:3px 0}.g i{width:3px;border:solid;border-width:0 1px 1px;border-color:#fff #a0a0a0 #a0a0a0 #fff}
.c{flex:1;display:flex;flex-direction:column;background:#fff;border:solid #696969;border-width:2px 1px 0 1px;border-right-color:#e3e3e3;min-width:0}
.h{flex:1;display:flex;min-height:0}.o{flex:1;padding:1px 0 0 1px}.o div{white-space:pre;height:16px}
label{display:flex;align-items:center;height:20px;flex:none;border-top:1px solid #a0a0a0;padding:2px 0 0 1px}
input{border:0;outline:0;padding:0;margin:0;flex:1;font:inherit;background:none;height:16px}
.b{width:20px;background:#f0f0f0;display:flex;flex-direction:column}.b button{height:22px;display:grid;place-items:center}.b i{flex:1;background:#cdcdcd;margin-right:1px}`,
`<div class="g"><i></i><i></i></div><div class="c"><div class="h"><div class="o"><div>点J/微导线A/延伸E/插点I/回退U/换向H&lt;指定点&gt;</div><div>输入宗地号注记位置:</div><div>未发现有效的图案填充边界。</div><div>命令: *取消*</div></div><div class="b"><button aria-label="上滚"><svg width="10" height="7"><path d="M1 6L5 1.500L9 6" stroke="#555" stroke-width="2" fill="none"/></svg></button><i></i><button aria-label="下滚"><svg width="10" height="7"><path d="M1 1L5 5.500L9 1" stroke="#555" stroke-width="2" fill="none"/></svg></button></div></div><label>命令:<input type="text"></label></div>`);

define('status-bar',`:host{display:flex;align-items:center;height:23px;flex:none;padding:4px 3px 0 8px;font:15px/18px var(--mono);border-top:1px solid #fff}
.l{width:45px}.s{width:46px}.s,.x,.d{font-size:13px}
.x{width:332px;height:18px;border:1px solid #a0a0a0;padding-left:1px;white-space:pre;margin-right:4px}
.b{display:flex;gap:4px;margin-right:auto}
button{height:18px;width:34px;border:1px solid;border-color:#fff #a0a0a0 #a0a0a0 #fff;line-height:16px}.on{border-color:#000 #fff #fff #000;background:#f5f5f5}.w{width:64px}.d{width:28px}
.y{display:flex;gap:8px;align-items:center}`,
`<span class="l">比例</span><span class="s">1:500</span><span class="x">56.0861,  82.5495 , 0.0000</span><div class="b"><button>捕捉</button><button>栅格</button><button>正交</button><button class="on">极轴</button><button class="on w">对象捕捉</button><button class="w">对象追踪</button><button class="d">DYN</button><button class="on">线宽</button><button class="on">模型</button></div><div class="y">${svg('dish',13)}${svg('lockY')}<svg width="10" height="6"><path d="M1 1H9L5 5Z"/></svg></div>`);

define('ime-bar',`:host{position:absolute;right:17px;bottom:20px;height:31px;display:flex;align-items:center;background:#fff;border:1px solid #b9cfea;border-radius:4px;padding:0 6px 0 22px;gap:13px;color:#0a6fdb}
.l{position:absolute;left:-24px;top:-7px;overflow:visible}b{font:600 17px/20px "Noto Sans CJK SC",sans-serif;width:17px}
p{position:absolute;right:-2px;top:19px;margin:0;font:17px/24px "Open Sans",sans-serif;color:rgba(130,130,130,.85);text-shadow:1px 1px #fff;white-space:nowrap}`,
`<svg class="l" width="40" height="38"><g transform="rotate(-11 20 19)"><rect x="3" y="3" width="34" height="33" rx="4" fill="#f15a24"/><text x="20" y="31" font-family="Liberation Sans,sans-serif" font-weight="700" font-size="34" fill="#fff" text-anchor="middle">S</text></g></svg>
<b>中</b><svg width="16" height="18"><circle cx="4" cy="5" r="2.300" fill="none" stroke="#0a6fdb" stroke-width="1.700"/><path d="M10 9.500a2.200 2.200 0 1 1 4.500 0c0 3-1.500 5-4 6l-.5-1c1.500-1 2-2 2-3C11 11.500 10 10.500 10 9.500Z" fill="#0a6fdb"/></svg>
<svg width="16" height="20" fill="none" stroke="#0a6fdb"><path d="M1 9C1 17 15 17 15 9M8 15V19" stroke-width="2"/><rect x="5" y="1" width="6" height="11" rx="3" fill="#0a6fdb"/></svg>
<svg width="19" height="16"><rect x="1" y="1" width="17" height="14" rx="2" fill="none" stroke="#0a6fdb" stroke-width="2"/><path d="M4 5H15M4 8.500H15" stroke="#0a6fdb" stroke-width="2" stroke-dasharray="2 1"/><path d="M6 12H13" stroke="#0a6fdb" stroke-width="1.500"/></svg>
<svg width="18" height="16"><path d="M5 0C6 3 12 3 13 0L18 3V8H15V16H3V8H0V3Z" fill="#0a6fdb"/></svg>
<svg width="19" height="17"><path d="M4 1H15C20 5 19 12 15 10.500H4C0 12 -1 5 4 1Z" fill="#0a6fdb"/><path d="M6 4V8M4 6H8" stroke="#fff" stroke-width="1.300"/><circle cx="12.500" cy="5" r="1" fill="#fff"/><circle cx="14" cy="7.500" r="1" fill="#fff"/><path d="M2 13L4 15M17 13L15 15" stroke="#0a6fdb" stroke-width="2.500"/></svg>
<svg width="17" height="17" fill="#0a6fdb"><rect width="7.500" height="7.500" rx="2"/><rect x="10.300" y="1" width="5.500" height="5.500" rx="2" fill="none" stroke="#0a6fdb" stroke-width="2"/><rect y="9.500" width="7.500" height="7.500" rx="2"/><rect x="9.500" y="9.500" width="7.500" height="7.500" rx="2"/></svg>
<p>CSDN @create_right</p>`);
</script>
</body>
</html>
